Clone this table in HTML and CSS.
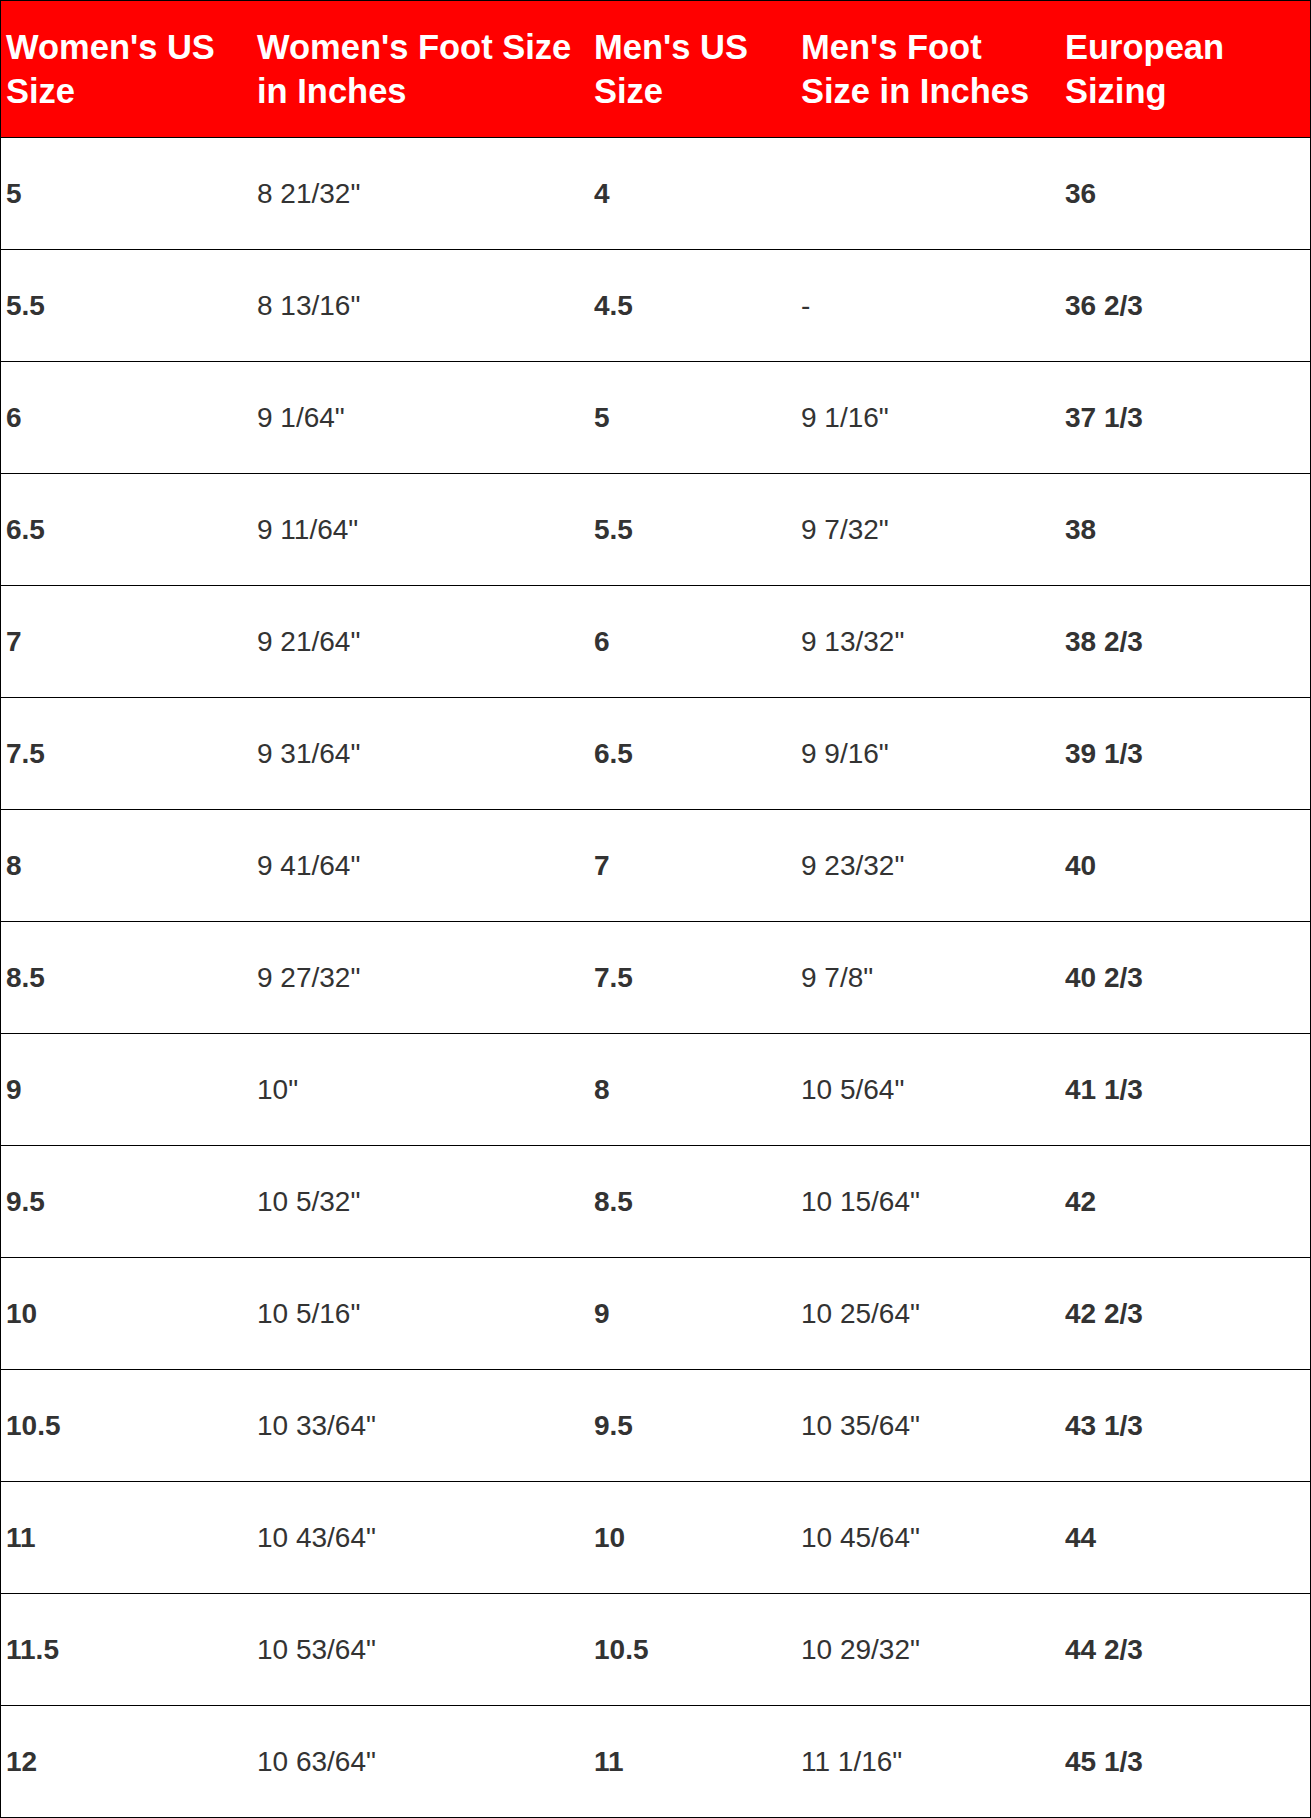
FILE: index.html
```html
<!DOCTYPE html>
<html lang="en">
<head>
<meta charset="utf-8">
<title>Shoe Size Chart</title>
<link rel="stylesheet" href="styles.css">
</head>
<body>
<div class="chart">
  <div class="row head">
    <div class="cell">Women's US Size</div>
    <div class="cell">Women's Foot Size in Inches</div>
    <div class="cell">Men's US Size</div>
    <div class="cell">Men's Foot Size in Inches</div>
    <div class="cell">European Sizing</div>
  </div>
  <div class="row"><div class="cell b">5</div><div class="cell">8 21/32"</div><div class="cell b">4</div><div class="cell"></div><div class="cell b">36</div></div>
  <div class="row"><div class="cell b">5.5</div><div class="cell">8 13/16"</div><div class="cell b">4.5</div><div class="cell">-</div><div class="cell b">36 2/3</div></div>
  <div class="row"><div class="cell b">6</div><div class="cell">9 1/64"</div><div class="cell b">5</div><div class="cell">9 1/16"</div><div class="cell b">37 1/3</div></div>
  <div class="row"><div class="cell b">6.5</div><div class="cell">9 11/64"</div><div class="cell b">5.5</div><div class="cell">9 7/32"</div><div class="cell b">38</div></div>
  <div class="row"><div class="cell b">7</div><div class="cell">9 21/64"</div><div class="cell b">6</div><div class="cell">9 13/32"</div><div class="cell b">38 2/3</div></div>
  <div class="row"><div class="cell b">7.5</div><div class="cell">9 31/64"</div><div class="cell b">6.5</div><div class="cell">9 9/16"</div><div class="cell b">39 1/3</div></div>
  <div class="row"><div class="cell b">8</div><div class="cell">9 41/64"</div><div class="cell b">7</div><div class="cell">9 23/32"</div><div class="cell b">40</div></div>
  <div class="row"><div class="cell b">8.5</div><div class="cell">9 27/32"</div><div class="cell b">7.5</div><div class="cell">9 7/8"</div><div class="cell b">40 2/3</div></div>
  <div class="row"><div class="cell b">9</div><div class="cell">10"</div><div class="cell b">8</div><div class="cell">10 5/64"</div><div class="cell b">41 1/3</div></div>
  <div class="row"><div class="cell b">9.5</div><div class="cell">10 5/32"</div><div class="cell b">8.5</div><div class="cell">10 15/64"</div><div class="cell b">42</div></div>
  <div class="row"><div class="cell b">10</div><div class="cell">10 5/16"</div><div class="cell b">9</div><div class="cell">10 25/64"</div><div class="cell b">42 2/3</div></div>
  <div class="row"><div class="cell b">10.5</div><div class="cell">10 33/64"</div><div class="cell b">9.5</div><div class="cell">10 35/64"</div><div class="cell b">43 1/3</div></div>
  <div class="row"><div class="cell b">11</div><div class="cell">10 43/64"</div><div class="cell b">10</div><div class="cell">10 45/64"</div><div class="cell b">44</div></div>
  <div class="row"><div class="cell b">11.5</div><div class="cell">10 53/64"</div><div class="cell b">10.5</div><div class="cell">10 29/32"</div><div class="cell b">44 2/3</div></div>
  <div class="row"><div class="cell b">12</div><div class="cell">10 63/64"</div><div class="cell b">11</div><div class="cell">11 1/16"</div><div class="cell b">45 1/3</div></div>
</div>
</body>
</html>
```
FILE: styles.css
```css
html, body {
  margin: 0;
  padding: 0;
  background: #fff;
}
.chart {
  width: 1311px;
  box-sizing: border-box;
  border: 1px solid #000;
  border-bottom: 0;
  font-family: "Liberation Sans", Arial, sans-serif;
  color: #333;
}
.row {
  display: grid;
  grid-template-columns: 251px 337px 207px 264px 250px;
  align-items: center;
  height: 112px;
  box-sizing: border-box;
  border-bottom: 1px solid #000;
  font-size: 28px;
  line-height: 32px;
}
.row.head {
  height: 137px;
  background: #ff0000;
  color: #fff;
  font-weight: bold;
  font-size: 34.5px;
  line-height: 44px;
}
.cell {
  padding-left: 5px;
  padding-right: 4px;
}
.b {
  font-weight: bold;
}
```
